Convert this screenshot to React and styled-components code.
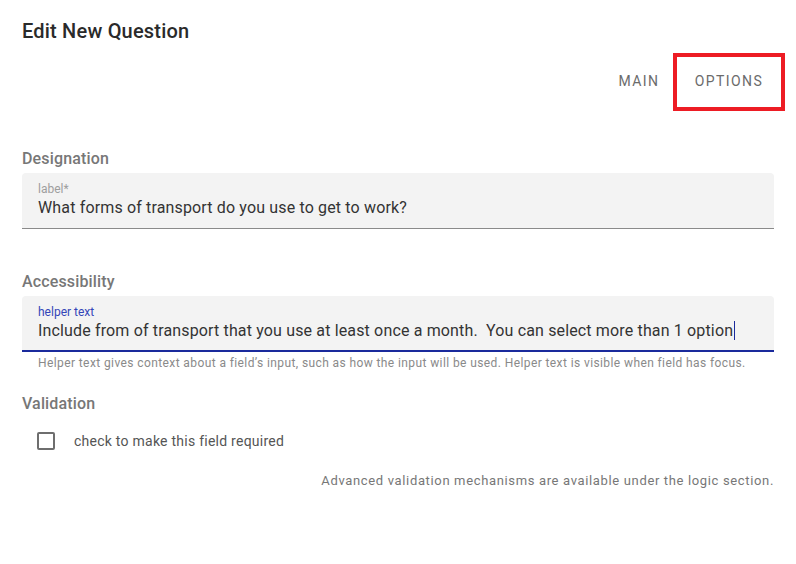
import React from 'react'
import styled, { createGlobalStyle } from 'styled-components'

const GlobalStyle = createGlobalStyle`
  html, body {
    margin: 0;
    background: #fff;
    font-family: Roboto, "Liberation Sans", Arial, sans-serif;
  }
`;

const Dialog = styled.div`
  width: 796px;
  height: 564px;
  box-sizing: border-box;
  padding: 15px 22px 0;
  background: #fff;
  border-radius: 0 0 6px 6px;
`;

const Title = styled.h2`
  margin: 0;
  font-size: 20px;
  line-height: 32px;
  font-weight: 500;
  color: #2a2a2a;
  letter-spacing: 0.2px;
`;

const TabBar = styled.div`
  display: flex;
  justify-content: flex-end;
  margin-top: 10px;
`;

const Tab = styled.div`
  position: relative;
  width: 90px;
  height: 48px;
  display: flex;
  align-items: center;
  justify-content: center;
  font-size: 14px;
  font-weight: 400;
  letter-spacing: 1.4px;
  color: #6b6b6b;
`;

const Highlight = styled.span`
  position: absolute;
  left: -11px;
  right: -11px;
  top: -4px;
  bottom: -6px;
  border: 4px solid #ed1c24;
`;

const SectionTitle = styled.h3`
  margin: ${p => p.$top}px 0 2px;
  font-size: 16px;
  line-height: 24px;
  font-weight: 500;
  color: #777;
  letter-spacing: 0.15px;
`;

const Field = styled.div`
  display: flex;
  flex-direction: column;
  height: 56px;
  box-sizing: border-box;
  padding: 9px 16px 0;
  background: #f3f3f3;
  border-radius: 4px 4px 0 0;
  border-bottom: ${p => (p.$focused ? '2px solid #1a2a9c' : '1px solid #8a8a8a')};
`;

const FieldLabel = styled.span`
  font-size: 12px;
  line-height: 14px;
  color: ${p => (p.$focused ? '#3346b8' : '#9e9e9e')};
`;

const FieldValue = styled.span`
  margin-top: 2px;
  font-size: 16px;
  line-height: 20px;
  color: #333;
  letter-spacing: 0.15px;
  white-space: nowrap;
`;

const Caret = styled.span`
  display: inline-block;
  width: 1px;
  height: 19px;
  margin-left: 1px;
  vertical-align: -4px;
  background: #1a2a9c;
`;

const Helper = styled.p`
  margin: 4px 0 0 16px;
  font-size: 12px;
  line-height: 14px;
  color: #8a8a8a;
  letter-spacing: 0.4px;
`;

const CheckRow = styled.label`
  display: flex;
  align-items: center;
  gap: 19px;
  margin: 16px 0 0 15px;
  font-size: 14px;
  color: #555;
  letter-spacing: 0.25px;
`;

const Box = styled.span`
  width: 18px;
  height: 18px;
  box-sizing: border-box;
  border: 2px solid #6e6e6e;
  border-radius: 2px;
`;

const Note = styled.p`
  margin: 23px 0 0;
  text-align: right;
  font-size: 13px;
  line-height: 16px;
  color: #777;
  letter-spacing: 0.65px;
`;

export default function App() {
  return (
    <>
      <GlobalStyle />
      <Dialog>
        <Title>Edit New Question</Title>
        <TabBar>
          <Tab>MAIN</Tab>
          <Tab>
            OPTIONS
            <Highlight />
          </Tab>
        </TabBar>

        <SectionTitle $top={42}>Designation</SectionTitle>
        <Field>
          <FieldLabel>label*</FieldLabel>
          <FieldValue>What forms of transport do you use to get to work?</FieldValue>
        </Field>

        <SectionTitle $top={41}>Accessibility</SectionTitle>
        <Field $focused>
          <FieldLabel $focused>helper text</FieldLabel>
          <FieldValue>
            Include from of transport that you use at least once a month.&nbsp; You can select more than 1 option
            <Caret />
          </FieldValue>
        </Field>
        <Helper>
          Helper text gives context about a field’s input, such as how the input will be used. Helper text is visible when field has focus.
        </Helper>

        <SectionTitle $top={22}>Validation</SectionTitle>
        <CheckRow>
          <Box />
          check to make this field required
        </CheckRow>
        <Note>Advanced validation mechanisms are available under the logic section.</Note>
      </Dialog>
    </>
  )
}
